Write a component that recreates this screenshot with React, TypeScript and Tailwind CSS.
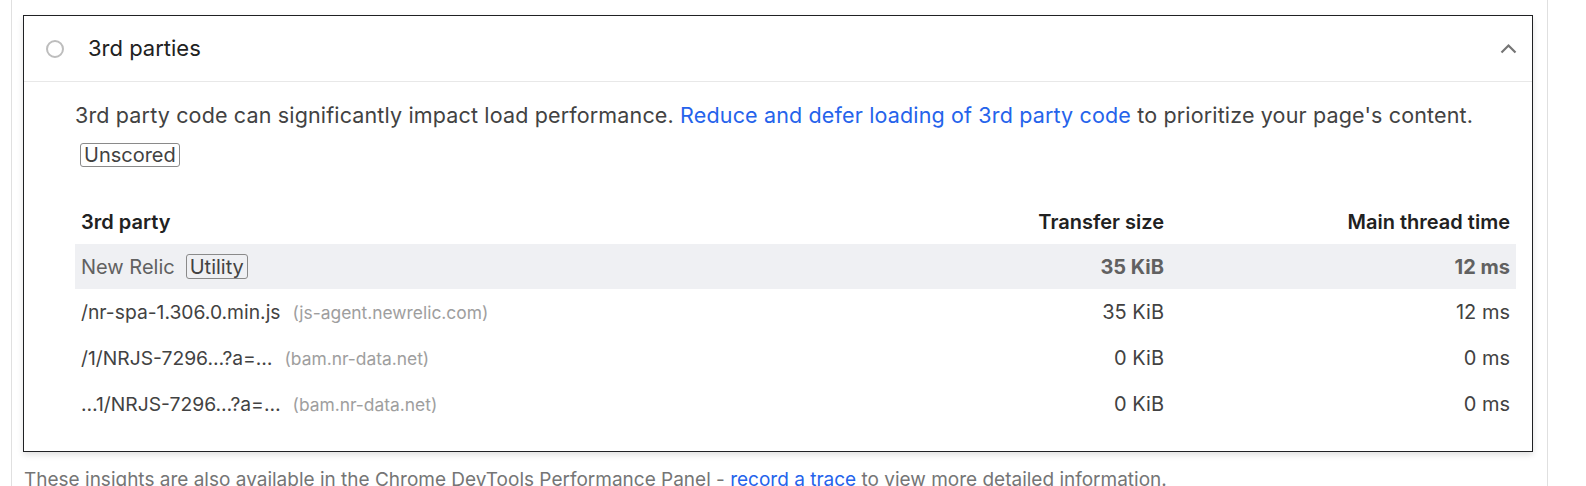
import React from "react";

const rows = [
  { path: "/nr-spa-1.306.0.min.js", domain: "(js-agent.newrelic.com)", size: "35 KiB", time: "12 ms" },
  { path: "/1/NRJS-7296…?a=…", domain: "(bam.nr-data.net)", size: "0 KiB", time: "0 ms" },
  { path: "…1/NRJS-7296…?a=…", domain: "(bam.nr-data.net)", size: "0 KiB", time: "0 ms" },
];

export default function App() {
  return (
    <div
      className="w-[1586px] h-[486px] overflow-hidden bg-white"
      style={{ fontFamily: "Inter, 'Noto Sans', sans-serif" }}
    >
      <div className="ml-[11px] w-[1537px] h-[486px] border-l border-r border-[#e0e0e0] pl-[11px] pr-[14px] pt-[15px]">
        <div className="border border-[#202124] bg-white shadow-[0_3px_6px_rgba(0,0,0,0.12)]">
          {/* Header */}
          <div className="h-[66px] flex items-center border-b border-[#e8e8e8] pl-[22px] pr-[15px]">
            <span className="w-[18px] h-[18px] rounded-full border-2 border-[#bdbdbd] shrink-0" />
            <span className="ml-[24px] text-[22px] text-[#212121]">3rd parties</span>
            <span className="ml-auto">
              <svg width="17" height="11" viewBox="0 0 17 11" fill="none">
                <path d="M1.5 9.5 L8.5 2.5 L15.5 9.5" stroke="#757575" strokeWidth="2.2" />
              </svg>
            </span>
          </div>
          {/* Body */}
          <div className="pl-[51px] pr-[16px] pt-[18px] pb-[24px]">
            <div className="text-[21.5px] leading-[30px] text-[#424242] tracking-[0.15px]">
              3rd party code can significantly impact load performance.{" "}
              <span className="text-[#2563eb]">Reduce and defer loading of 3rd party code</span> to prioritize your
              page's content.
            </div>
            <div className="mt-[13px] ml-[5px] inline-flex h-[24px] items-center rounded-[3px] border border-[#8a8a8a] px-[3px] text-[20px] text-[#424242] leading-none">
              Unscored
            </div>
            <div className="mt-[31px] text-[#212121]">
              <div className="grid grid-cols-[1fr_260px_346px] h-[45px] items-center px-[6px] text-[20px] font-semibold">
                <div>3rd party</div>
                <div className="text-right">Transfer size</div>
                <div className="text-right">Main thread time</div>
              </div>
              <div className="grid grid-cols-[1fr_260px_346px] h-[45px] items-center px-[6px] bg-[#eff0f3] text-[20px] text-[#616161]">
                <div className="flex items-center">
                  <span>New Relic</span>
                  <span className="ml-[11px] inline-flex h-[25px] items-center rounded-[3px] border border-[#8a8a8a] px-[3px] text-[20px] text-[#424242] leading-none">
                    Utility
                  </span>
                </div>
                <div className="text-right font-bold">35 KiB</div>
                <div className="text-right font-bold">12 ms</div>
              </div>
              {rows.map((r, i) => (
                <div
                  key={i}
                  className="grid grid-cols-[1fr_260px_346px] h-[46px] items-center px-[6px] text-[19.3px] text-[#424242]"
                >
                  <div className="flex items-baseline">
                    <span>{r.path}</span>
                    <span className="ml-[12px] text-[17.4px] text-[#9e9e9e]">{r.domain}</span>
                  </div>
                  <div className="text-right text-[20px]">{r.size}</div>
                  <div className="text-right text-[20px]">{r.time}</div>
                </div>
              ))}
            </div>
          </div>
        </div>
        <div className="mt-[14px] ml-[1px] text-[19px] text-[#757575] whitespace-nowrap">
          These insights are also available in the Chrome DevTools Performance Panel -{" "}
          <span className="text-[#2563eb]">record a trace</span> to view more detailed information.
        </div>
      </div>
    </div>
  );
}
